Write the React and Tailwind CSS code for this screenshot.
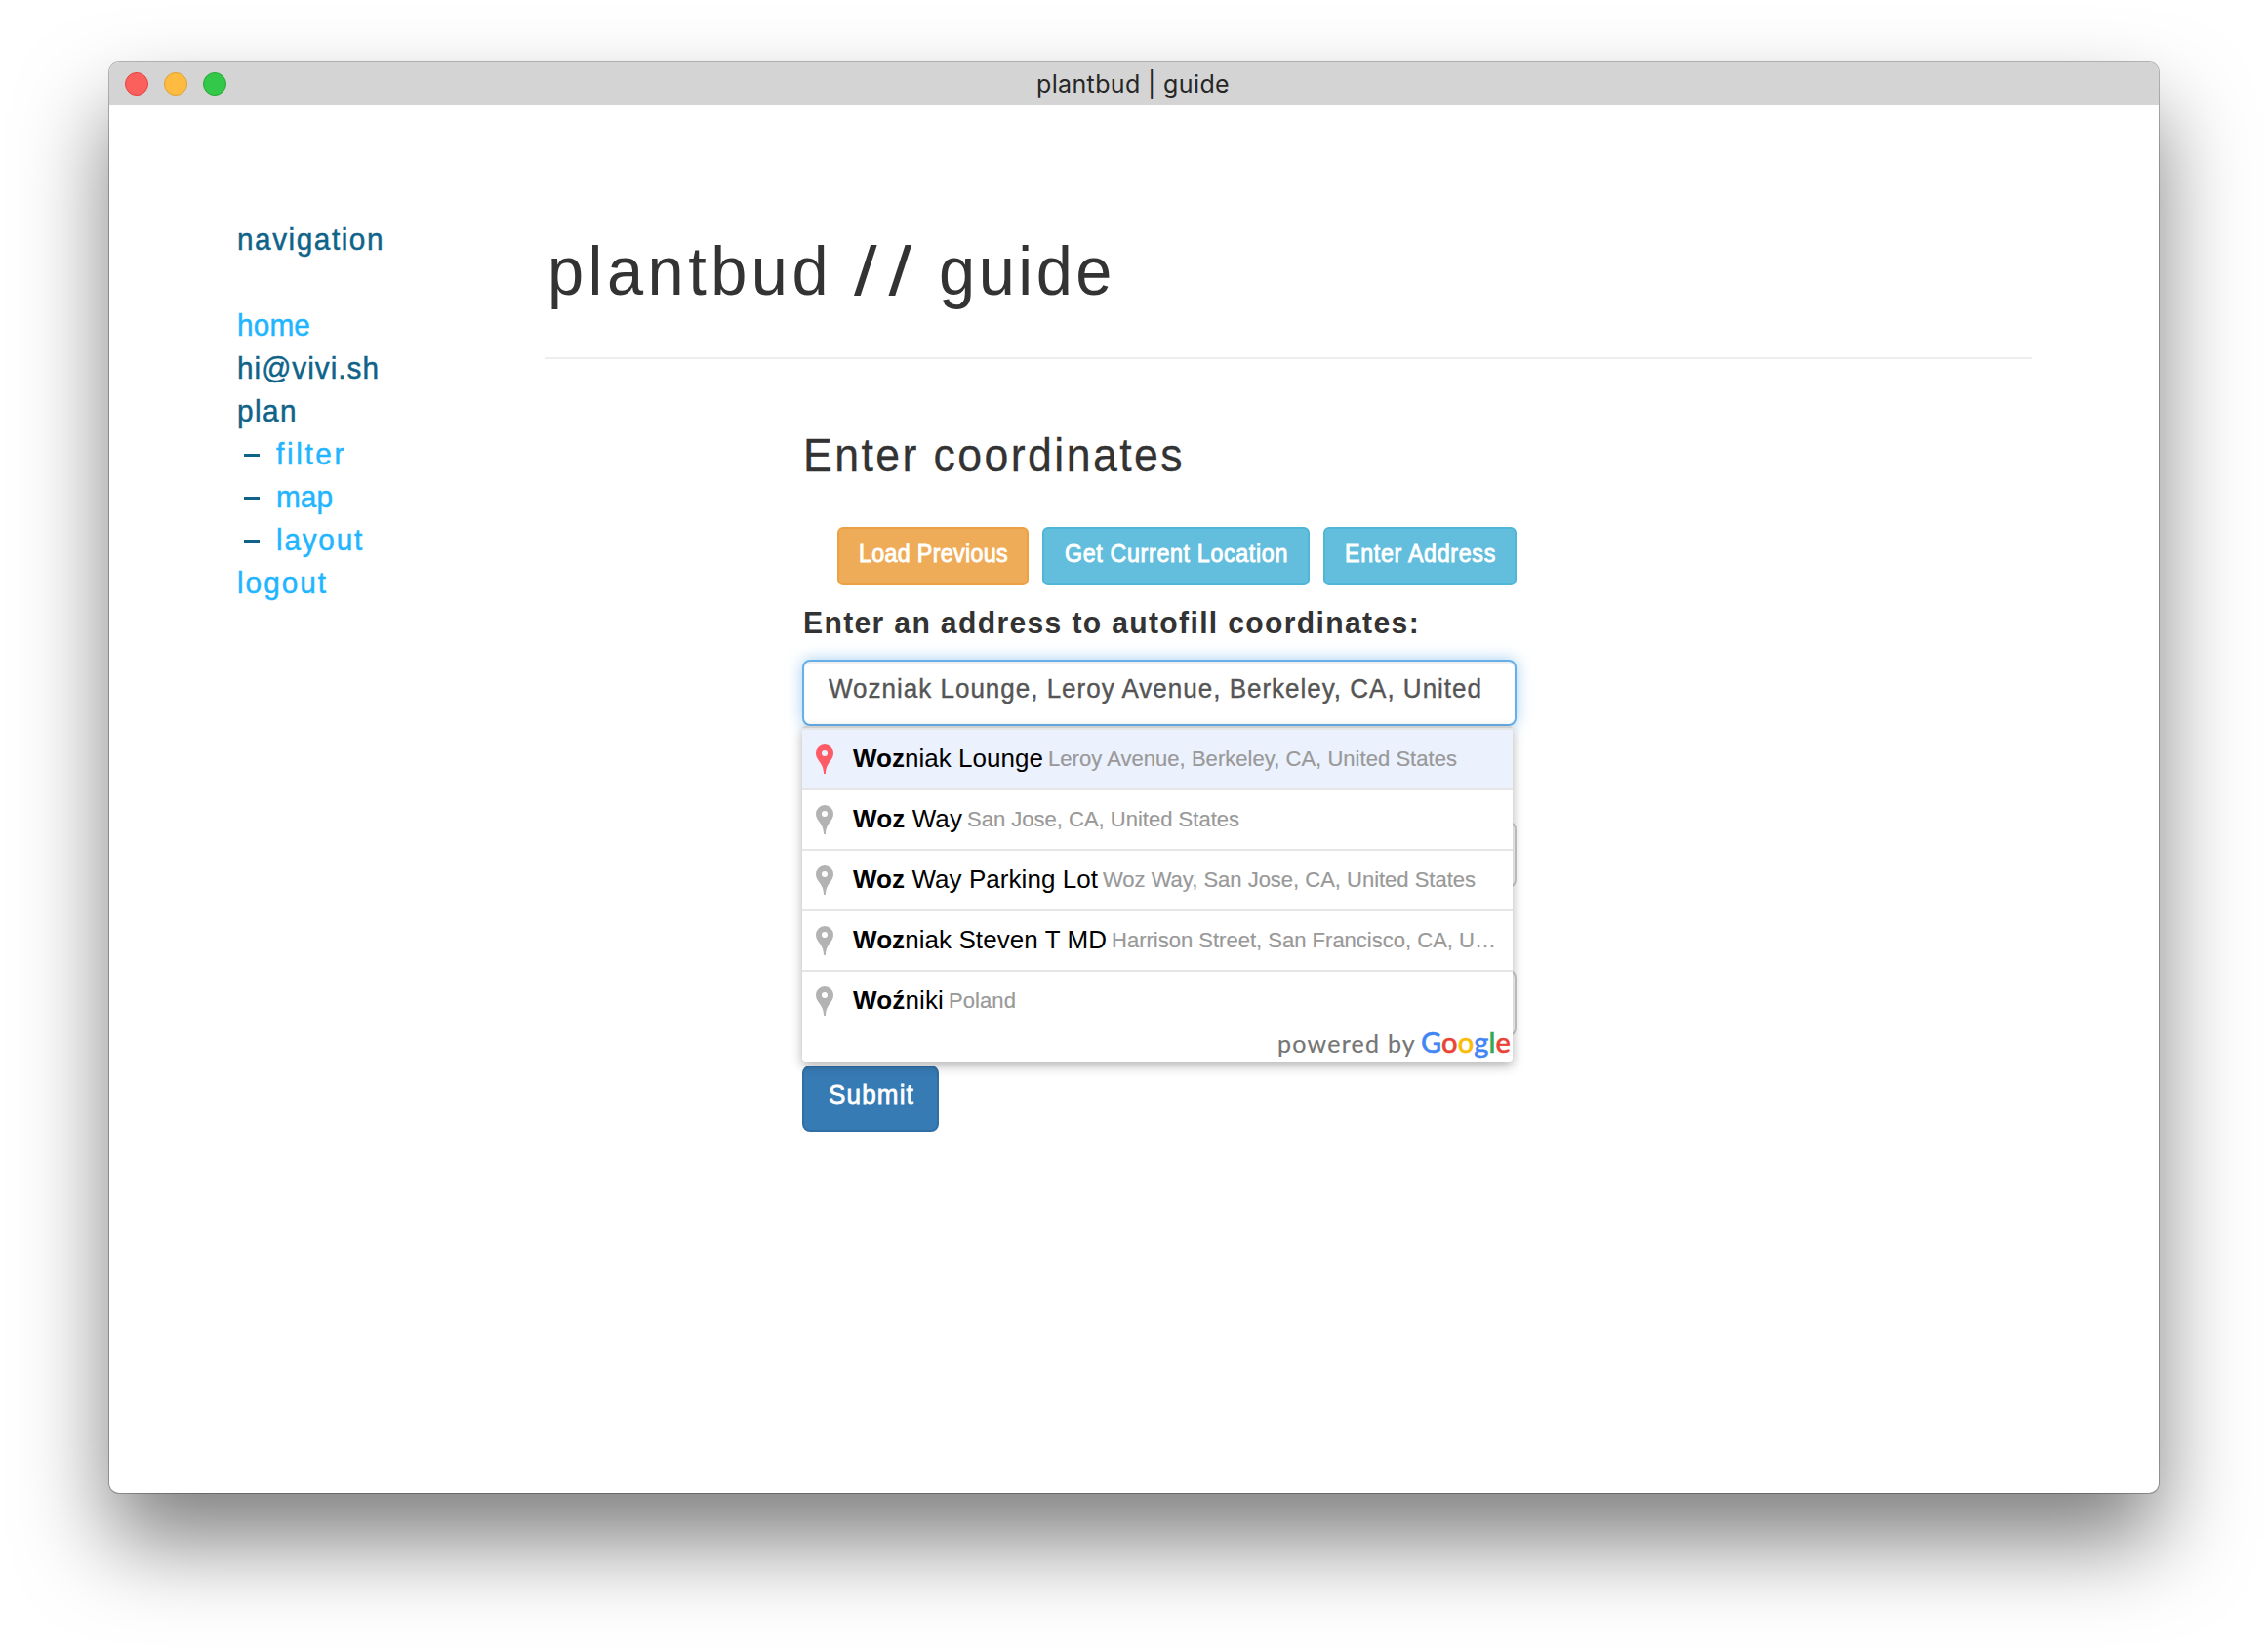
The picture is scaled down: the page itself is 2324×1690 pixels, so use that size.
import { useLayoutEffect, useRef, useState } from 'react';

// Sets its text to a given advance width by spreading the letters.
function Fit({ w, scale = 1, className = '', children }) {
  const ref = useRef(null);
  const [spacing, setSpacing] = useState(0);
  useLayoutEffect(() => {
    const natural = ref.current.getBoundingClientRect().width / scale;
    setSpacing((w / scale - natural) / ref.current.textContent.length);
  }, []);
  return (
    <span
      ref={ref}
      className={`inline-block origin-left whitespace-pre ${className}`}
      style={{
        letterSpacing: `${spacing}px`,
        transform: scale === 1 ? undefined : `scaleX(${scale})`,
        marginRight: scale === 1 ? undefined : `${w - w / scale}px`,
      }}
    >
      {children}
    </span>
  );
}

const NARROW = 0.93;

function NavItem({ w, link, dash, children }) {
  return (
    <li className={`flex h-11 items-center text-[32px] leading-[44px] [-webkit-text-stroke:0.5px] ${link ? 'text-[#22b5ff]' : 'text-[#0f6389]'}`}>
      {dash && <span className="mr-[17px] ml-[7px] mt-[2px] h-[3px] w-4 bg-[#0f6389]" />}
      <Fit w={w} scale={NARROW}>{children}</Fit>
    </li>
  );
}

function Button({ w, className, children }) {
  return (
    <button className={`flex h-[60px] rounded-[6px] border-2 pt-2 text-[25px] leading-[34px] text-white [-webkit-text-stroke:0.9px_white] ${className}`}>
      <Fit w={w} scale={NARROW}>{children}</Fit>
    </button>
  );
}

function Pin({ className }) {
  return (
    <svg viewBox="0 0 18 30" className={`mt-[15px] ml-[14px] h-[30px] w-[18px] shrink-0 ${className}`} fill="currentColor">
      <path fillRule="evenodd" d="M9 0a9 9 0 0 1 9 9c0 3.400-1.700 5.800-3.600 8.400C12.200 20.400 10.300 23 9.900 30H8.100C7.700 23 5.800 20.400 3.600 17.400 1.700 14.800 0 12.400 0 9a9 9 0 0 1 9-9Zm0 6a3 3 0 1 0 0 6 3 3 0 0 0 0-6Z" />
    </svg>
  );
}

const places = [
  { bold: 'Woz', rest: 'niak Lounge', area: 'Leroy Avenue, Berkeley, CA, United States', w1: 195, w2: 419, active: true },
  { bold: 'Woz', rest: ' Way', area: 'San Jose, CA, United States', w1: 112, w2: 279 },
  { bold: 'Woz', rest: ' Way Parking Lot', area: 'Woz Way, San Jose, CA, United States', w1: 251, w2: 382 },
  { bold: 'Woz', rest: 'niak Steven T MD', area: 'Harrison Street, San Francisco, CA, U…', w1: 260, w2: 394 },
  { bold: 'Woź', rest: 'niki', area: 'Poland', w1: 93, w2: 69 },
];

export default function App() {
  return (
    <div className="h-[1690px] w-[2324px] overflow-hidden bg-white pt-16 pl-28 font-['Liberation_Sans',sans-serif]">
      <div className="h-[1466px] w-[2100px] rounded-[10px] bg-white shadow-[0_0_0_1px_rgba(0,0,0,0.27),0_50px_90px_rgba(0,0,0,0.5)]">
        <header className="flex h-11 items-center rounded-t-[10px] bg-[#d4d4d4]">
          <div className="flex w-[950px] gap-4 pl-4">
            <span className="size-6 rounded-full border border-[#e2443f] bg-[#fc605c]" />
            <span className="size-6 rounded-full border border-[#e0a033] bg-[#fdbc40]" />
            <span className="size-6 rounded-full border border-[#27a833] bg-[#34c84a]" />
          </div>
          <h1 className="pt-[2px] font-['Inter',sans-serif] text-[25px] text-[#262626]"><Fit w={198}>plantbud | guide</Fit></h1>
        </header>
        <div className="flex">
          <nav className="w-[446px] pt-[115px] pl-[131px]">
            <ul>
              <NavItem w={151}>navigation</NavItem>
              <li className="h-11" />
              <NavItem w={75} link>home</NavItem>
              <NavItem w={146}>hi@vivi.sh</NavItem>
              <NavItem w={62}>plan</NavItem>
              <NavItem w={72} link dash>filter</NavItem>
              <NavItem w={58} link dash>map</NavItem>
              <NavItem w={90} link dash>layout</NavItem>
              <NavItem w={93} link>logout</NavItem>
            </ul>
          </nav>
          <main className="w-[1524px] text-[#333]">
            <div className="flex h-[260px] border-b-2 border-[#eee] pt-[128px] pl-[3px] text-[71px] leading-[84px]">
              <Fit w={292} scale={0.94}>plantbud</Fit>
              <Fit w={71} scale={1.2} className="ml-[22px]">//</Fit>
              <Fit w={181} scale={0.94} className="ml-4">guide</Fit>
            </div>
            <section className="ml-[264px] w-[732px]">
              <h2 className="h-[172px] pt-[71px] text-[48px] leading-[56px] [-webkit-text-stroke:0.3px]"><Fit w={391} scale={NARROW} className="ml-px">Enter coordinates</Fit></h2>
              <div className="flex justify-end gap-[14px]">
                <Button w={153} className="w-[196px] border-[#eda145] bg-[#efac58] pl-5">Load Previous</Button>
                <Button w={229} className="w-[274px] border-[#4eb6d6] bg-[#62bedc] pl-[21px]">Get Current Location</Button>
                <Button w={155} className="w-[198px] border-[#4eb6d6] bg-[#62bedc] pl-5">Enter Address</Button>
              </div>
              <div className="h-[76px] pt-[18px] text-[32px] leading-10 font-bold"><Fit w={632} scale={0.94} className="ml-px">Enter an address to autofill coordinates:</Fit></div>
              <div className="relative">
                <div className="h-[68px] rounded-lg border-2 border-[#66afe9] bg-white pt-[10px] pl-[25px] text-[28px] leading-[36px] text-[#555] shadow-[inset_0_2px_2px_rgba(0,0,0,0.075),0_0_16px_rgba(102,175,233,0.6)] [-webkit-text-stroke:0.4px]">
                  <Fit w={670} scale={NARROW}>Wozniak Lounge, Leroy Avenue, Berkeley, CA, United</Fit>
                </div>
                <div className="mt-[98px] h-[68px] rounded-lg border-2 border-[#ccc]" />
                <div className="mt-[84px] h-[68px] rounded-lg border-2 border-[#ccc]" />
                <div className="absolute top-[68px] left-0 h-[344px] w-[728px] rounded-[4px] border-t-2 border-[#d0d0d0] bg-white shadow-[0_4px_12px_rgba(0,0,0,0.3)]">
                  {places.map((p) => (
                    <div key={p.area} className={`flex h-[62px] border-t-2 border-[#e6e6e6] ${p.active ? 'bg-[#ebf1fd]' : ''}`}>
                      <Pin className={p.active ? 'text-[#fd5b66]' : 'text-[#b3b3b3]'} />
                      <Fit w={p.w1} className="ml-5 text-[26px] leading-[58px] text-black">
                        <b>{p.bold}</b>{p.rest}
                      </Fit>
                      <Fit w={p.w2} className="ml-[5px] text-[22px] leading-[60px] text-[#999] [-webkit-text-stroke:0.2px]">{p.area}</Fit>
                    </div>
                  ))}
                  <div className="flex h-8 items-baseline justify-end pr-[2px] font-['Lato',sans-serif] leading-[24px] text-[#757575]">
                    <Fit w={142} className="mr-[5px] text-[25px] [-webkit-text-stroke:0.2px]">powered by</Fit>
                    <Fit w={92} className="text-[29px] font-medium [-webkit-text-stroke:0.5px]">
                      <span className="text-[#4285f4]">G</span>
                      <span className="text-[#ea4335]">o</span>
                      <span className="text-[#fbbc05]">o</span>
                      <span className="text-[#4285f4]">g</span>
                      <span className="text-[#34a853]">l</span>
                      <span className="text-[#ea4335]">e</span>
                    </Fit>
                  </div>
                </div>
              </div>
              <button className="mt-[30px] flex h-[68px] w-[140px] rounded-lg border-2 border-[#2f6fa6] bg-[#377bb5] pt-[10px] pl-[25px] text-[28px] leading-[36px] text-white [-webkit-text-stroke:0.8px_white]">
                <Fit w={88} scale={NARROW}>Submit</Fit>
              </button>
            </section>
          </main>
        </div>
      </div>
    </div>
  );
}
